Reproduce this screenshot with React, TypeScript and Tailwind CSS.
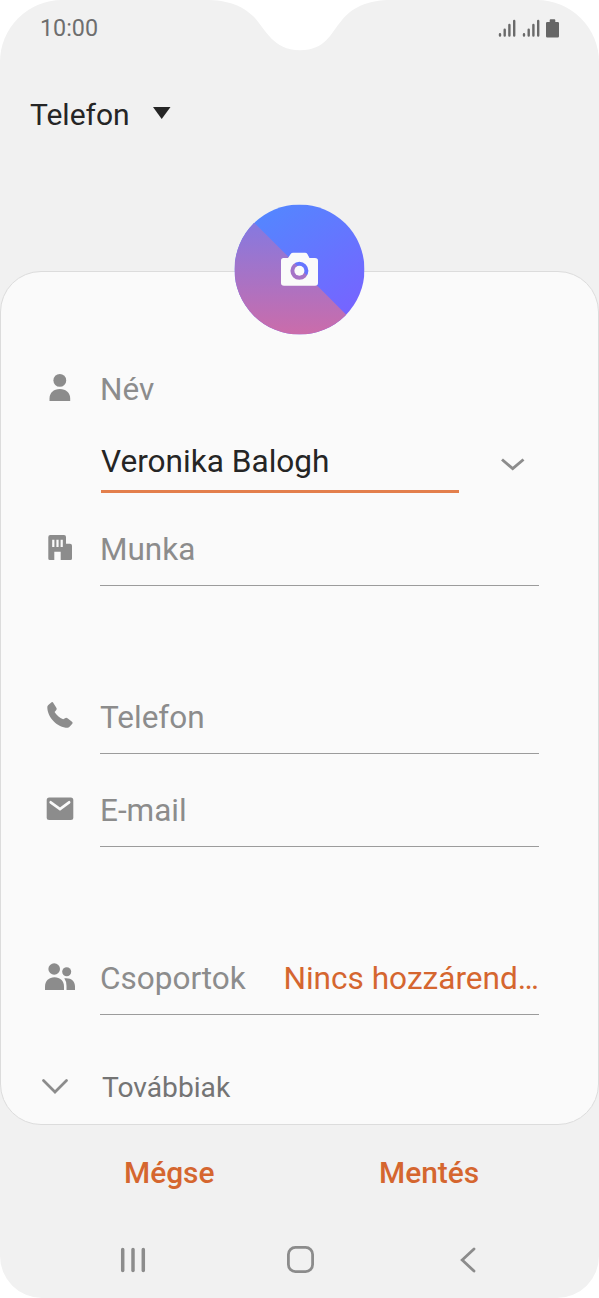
import React from "react";

const FONT = "font-['Roboto','Noto_Sans',sans-serif]";

function Notch() {
  return (
    <svg className="absolute left-[205px] top-0" width="190" height="52" viewBox="205 0 190 52">
      <path d="M205 0C229 0 242 6 253 16C266 29 272 50 300 50.200C326 50 330 34 342 20C352 8 366 0 392 0Z" fill="#fff" />
    </svg>
  );
}

function Signal() {
  return (
    <svg width="18" height="19" viewBox="0 0 18 19" fill="none" stroke="#6a6a6a" strokeWidth="2.400" strokeLinecap="round">
      <path d="M2 15.200V16.500M6.700 10.700V16.500M11.400 6V16.500M16.200 2V16.500" />
    </svg>
  );
}

function Battery() {
  return (
    <svg width="13" height="19" viewBox="0 0 13 19" fill="#666">
      <path d="M1.200 3H3.700V1.200Q3.700 .3 4.600 .3H8.400Q9.300 .3 9.300 1.200V3H11.800Q13 3 13 4.200V17.300Q13 18.500 11.800 18.500H1.200Q0 18.500 0 17.300V4.200Q0 3 1.200 3Z" />
    </svg>
  );
}

function Avatar() {
  return (
    <svg width="131" height="131" viewBox="-0.500 -0.500 131 131">
      <defs>
        <linearGradient id="blue" x1="0.200" y1="0" x2="0.850" y2="1">
          <stop offset="0" stopColor="#5288ff" />
          <stop offset="1" stopColor="#7a60ff" />
        </linearGradient>
        <linearGradient id="pink" gradientUnits="userSpaceOnUse" x1="0" y1="18" x2="0" y2="130">
          <stop offset="0" stopColor="#8579e0" />
          <stop offset="1" stopColor="#cb6caa" />
        </linearGradient>
        <clipPath id="disc"><circle cx="65" cy="65" r="65" /></clipPath>
      </defs>
      <g clipPath="url(#disc)">
        <rect width="130" height="130" fill="url(#blue)" />
        <path d="M0 -1.600L131.600 130H0Z" fill="url(#pink)" />
      </g>
      <path
        fillRule="evenodd"
        fill="#fafafa"
        d="M49 53.500H53.500L56 49.700Q57 48.300 58.700 48.300H70.500Q72.200 48.300 73 49.700L75 53.500H80.500Q83.500 53.500 83.500 56.300V78.500Q83.500 81.300 80.500 81.300H49.500Q46.500 81.300 46.500 78.500V56.300Q46.500 53.500 49 53.500ZM64.900 57.300A9 9 0 1 0 64.900 75.300A9 9 0 1 0 64.900 57.300Z"
      />
      <circle cx="64.900" cy="66.300" r="5" fill="#fafafa" />
    </svg>
  );
}

function Icon({ children }: { children?: React.ReactNode }) {
  return (
    <div className="w-[99px] shrink-0 pl-[39px]">
      <svg width="40" height="40" viewBox="0 0 40 40" fill="#8c8c8c">{children}</svg>
    </div>
  );
}

const label = "whitespace-nowrap text-[31.5px] leading-10 text-[#8c8c8c]";

function Field({ icon, text, className, children }: { icon: React.ReactNode; text: string; className: string; children?: React.ReactNode }) {
  return (
    <div className={"flex items-end " + className}>
      <div className="mb-[17px]"><Icon>{icon}</Icon></div>
      <div className="flex h-[57px] w-[439px] items-start justify-between border-b border-[#9b9b9b] pt-px">
        <span className={label}>{text}</span>
        {children}
      </div>
    </div>
  );
}

export default function App() {
  return (
    <div className="h-[1298px] w-[599px] bg-white">
      <div className={"relative flex h-[1298px] w-[599px] flex-col overflow-hidden rounded-t-[62px] rounded-b-[42px] bg-[#f1f1f1] " + FONT}>
        <Notch />
        <div className="flex h-14 items-center justify-between pl-[40px] pr-[40px]">
          <span className="text-[23.300px] leading-8 text-[#6e6e6e]">10:00</span>
          <div className="flex items-center gap-[6px]">
            <Signal />
            <Signal />
            <Battery />
          </div>
        </div>
        <div className="flex h-[116px] items-center gap-[23px] pl-[30px]">
          <span className="pt-[2px] text-[30px] leading-10 text-[#252525]">Telefon</span>
          <svg className="mb-[2px]" width="18" height="12" viewBox="0 0 18 12"><path d="M0 0H17.500L8.700 12Z" fill="#252525" /></svg>
        </div>
        <div className="mt-[99px] h-[854px] shrink-0 rounded-[41px] border border-[#dcdcdc] bg-[#fafafa]">
          <div className="-mt-[68px] flex h-[131px] justify-center"><Avatar /></div>
          <div className="mt-[27px] flex h-[54px] items-center">
            <Icon>
              <circle cx="19.800" cy="11.400" r="6.400" />
              <path d="M9.500 32V29.500C9.500 24 13.500 20 19.800 20S30.200 24 30.200 29.500V32Z" />
            </Icon>
            <span className={label + " pt-[2px]"}>Név</span>
          </div>
          <div className="flex h-[77px]">
            <div className="ml-[100px] flex w-[358px] items-end border-b-[3px] border-[#e37f4c]">
              <span className="mb-[8px] whitespace-nowrap text-[31.6px] leading-10 text-[#252525]">Veronika Balogh</span>
            </div>
            <svg className="ml-[42px] mt-[42px]" width="24" height="14" viewBox="0 0 24 14" fill="none" stroke="#8c8c8c" strokeWidth="2.900"><path d="M1 1.500L11.700 10.700L22.500 1.500" /></svg>
          </div>
          <Field
            className="h-[93px]"
            text="Munka"
            icon={<path fillRule="evenodd" d="M10.300 6H24Q26 6 26 8V14.700H30Q32 14.700 32 16.700V29.500Q32 31 30.500 31H20.700V22.700H14.300V31H9.800Q8.300 31 8.300 29.500V8Q8.300 6 10.300 6ZM12.200 10.700V18H14.400V10.700ZM16.400 10.700V18H18.600V10.700ZM20.600 10.700V18H22.800V10.700Z" />}
          />
          <Field
            className="h-[168px]"
            text="Telefon"
            icon={<path d="M11.600 5.300L8.300 8Q7.300 8.800 7.300 10C7.300 20.500 17.500 30.800 27.600 30.800Q28.600 30.800 29.300 30L32.300 26.700Q33.200 25.600 32 24.800L27.500 21.300Q26.500 20.600 25.500 21L23.200 22.200Q17.500 20 14.600 15L16.300 13Q17 12 16.500 11L13.200 5.800Q12.600 4.600 11.600 5.300Z" />}
          />
          <Field
            className="h-[93px]"
            text="E-mail"
            icon={<>
              <rect x="6.700" y="7.500" width="26.600" height="22.500" rx="2.500" />
              <path d="M10.700 12.300L20 19L29.100 12.300" fill="none" stroke="#fafafa" strokeWidth="2.700" strokeLinecap="round" />
            </>}
          />
          <Field
            className="h-[168px]"
            text="Csoportok"
            icon={<>
              <circle cx="14.200" cy="11" r="5.800" />
              <path d="M5 32V28.500C5 22.800 9 19.200 14.500 19.200S24 22.800 24 28.500V32Z" />
              <circle cx="26.700" cy="13.700" r="4.500" />
              <path d="M24.300 20.300C31 19.500 35 23 35 28.500V32H26.500V28Q26.300 23 24.300 20.300Z" />
            </>}
          >
            <span className="whitespace-nowrap text-[31.6px] leading-10 text-[#d5662f]">Nincs hozzárend…</span>
          </Field>
          <div className="flex h-[109px] items-center pt-[35px]">
            <svg className="ml-[41px]" width="26" height="16" viewBox="0 0 26 16" fill="none" stroke="#8c8c8c" strokeWidth="2.700" strokeLinecap="round"><path d="M1.500 1.500L13 13L24.500 1.500" /></svg>
            <span className="ml-[34px] pt-px text-[28.200px] leading-10 text-[#747474]">Továbbiak</span>
          </div>
        </div>
        <div className="flex h-[96px] shrink-0 items-center text-[29.900px] font-medium leading-10 text-[#d5662f]">
          <span className="ml-[124px] w-[255px]">Mégse</span>
          <span>Mentés</span>
        </div>
        <div className="flex h-[77px] items-center pl-[120px]">
          <svg width="26" height="26" viewBox="0 0 26 26" stroke="#8c8c8c" strokeWidth="3.500" strokeLinecap="round"><path d="M2.700 2.500V23.500M13 2.500V23.500M23.300 2.500V23.500" /></svg>
          <svg className="ml-[141px]" width="27" height="27" viewBox="0 0 27 27" fill="none" stroke="#8c8c8c" strokeWidth="2.800"><rect x="1.400" y="1.400" width="24.200" height="24.200" rx="7" /></svg>
          <svg className="ml-[146px]" width="16" height="26" viewBox="0 0 16 26" fill="none" stroke="#8c8c8c" strokeWidth="2.800" strokeLinecap="round"><path d="M14 2L2.200 13L14 24" /></svg>
        </div>
      </div>
    </div>
  );
}
